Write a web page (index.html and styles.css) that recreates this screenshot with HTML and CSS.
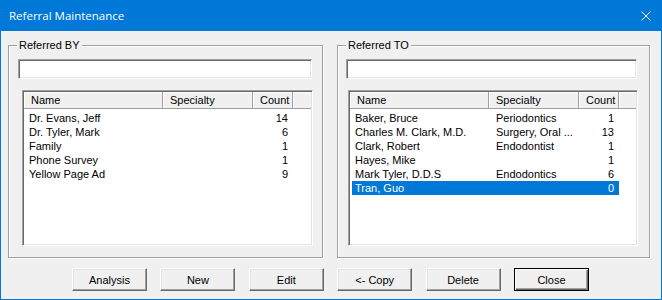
FILE: index.html
```html
<!DOCTYPE html>
<html lang="en">
<head>
  <meta charset="UTF-8" />
  <title>Referral Maintenance</title>
  <link rel="stylesheet" href="styles.css">
</head>
<body>
  <div class="window">
    <div class="titlebar">
      <span class="title">Referral Maintenance</span>
      <svg class="close-x" width="10" height="10" viewBox="0 0 10 10">
        <path d="M0.5 0.5 L9.5 9.5 M9.5 0.5 L0.5 9.5" stroke="#fff" stroke-width="1" fill="none" />
      </svg>
    </div>

    <div class="main">
      <div class="groups">
        <fieldset class="group group-by">
          <legend>Referred BY</legend>
          <input type="text" class="search" />
          <div class="list">
            <div class="list-head">
              <div class="hcell c-name">Name</div>
              <div class="hcell c-spec">Specialty</div>
              <div class="hcell c-count">Count</div>
              <div class="hcell c-fill"></div>
            </div>
            <div class="rows">
              <div class="row"><span class="name">Dr. Evans, Jeff</span><span class="spec"></span><span class="count">14</span></div>
              <div class="row"><span class="name">Dr. Tyler, Mark</span><span class="spec"></span><span class="count">6</span></div>
              <div class="row"><span class="name">Family</span><span class="spec"></span><span class="count">1</span></div>
              <div class="row"><span class="name">Phone Survey</span><span class="spec"></span><span class="count">1</span></div>
              <div class="row"><span class="name">Yellow Page Ad</span><span class="spec"></span><span class="count">9</span></div>
            </div>
          </div>
        </fieldset>

        <fieldset class="group group-to">
          <legend>Referred TO</legend>
          <input type="text" class="search" />
          <div class="list">
            <div class="list-head">
              <div class="hcell c-name">Name</div>
              <div class="hcell c-spec">Specialty</div>
              <div class="hcell c-count">Count</div>
              <div class="hcell c-fill"></div>
            </div>
            <div class="rows">
              <div class="row"><span class="name">Baker, Bruce</span><span class="spec">Periodontics</span><span class="count">1</span></div>
              <div class="row"><span class="name">Charles M. Clark, M.D.</span><span class="spec">Surgery, Oral ...</span><span class="count">13</span></div>
              <div class="row"><span class="name">Clark, Robert</span><span class="spec">Endodontist</span><span class="count">1</span></div>
              <div class="row"><span class="name">Hayes, Mike</span><span class="spec"></span><span class="count">1</span></div>
              <div class="row"><span class="name">Mark Tyler, D.D.S</span><span class="spec">Endodontics</span><span class="count">6</span></div>
              <div class="row selected"><span class="name">Tran, Guo</span><span class="spec"></span><span class="count">0</span></div>
            </div>
          </div>
        </fieldset>
      </div>

      <div class="buttons">
        <button type="button" class="btn">Analysis</button>
        <button type="button" class="btn">New</button>
        <button type="button" class="btn">Edit</button>
        <button type="button" class="btn">&lt;- Copy</button>
        <button type="button" class="btn">Delete</button>
        <button type="button" class="btn btn-default">Close</button>
      </div>
    </div>
  </div>
</body>
</html>
```

FILE: styles.css
```css
body {
  margin: 0;
}

.window {
  width: 662px;
  height: 300px;
  box-sizing: border-box;
  border: 1px solid #0078d7;
  border-top: 0;
  background: #f0f0f0;
  font-family: "Liberation Sans", Arial, sans-serif;
  font-size: 11px;
  color: #000;
}

.titlebar {
  height: 31px;
  background: #0078d7;
  color: #fff;
  display: flex;
  align-items: center;
  justify-content: space-between;
  padding: 0 10px 0 8px;
}

.title {
  font-family: "Open Sans", sans-serif;
  font-size: 11.5px;
}

.close-x {
  display: block;
}

.main {
  padding-left: 7px;
}

.groups {
  display: flex;
  gap: 14px;
  margin-top: 8px;
}

.group {
  margin: 0;
  padding: 0 0 11px;
  min-width: 0;
  border: 1px solid #a0a0a0;
  box-shadow: inset 1px 1px #fff, 1px 1px #fff;
}

.group-by {
  width: 315px;
  box-sizing: border-box;
}

.group-to {
  width: 313px;
  box-sizing: border-box;
}

.group legend {
  margin-left: 8px;
  padding: 0 2px;
  line-height: 13px;
  background: #f0f0f0;
}

.search {
  display: block;
  box-sizing: border-box;
  width: 294px;
  height: 20px;
  margin: 7px 0 0 9px;
  padding: 0;
  background: #fff;
  border: 1px solid;
  border-color: #a0a0a0 #fff #fff #a0a0a0;
  box-shadow: inset 1px 1px #696969, inset -1px -1px #e3e3e3;
}

.group-to .search {
  width: 291px;
  margin-left: 8px;
}

.list {
  box-sizing: border-box;
  width: 291px;
  height: 156px;
  margin: 11px 0 0 13px;
  padding: 1px;
  background: #fff;
  border: 1px solid;
  border-color: #a0a0a0 #fff #fff #a0a0a0;
  box-shadow: inset 1px 1px #696969, inset -1px -1px #e3e3e3;
  overflow: hidden;
}

.group-to .list {
  width: 290px;
  margin-left: 10px;
}

.list-head {
  display: flex;
  height: 17px;
}

.hcell {
  box-sizing: border-box;
  padding-left: 7px;
  line-height: 16px;
  background: #f0f0f0;
  border-right: 1px solid #a0a0a0;
  border-bottom: 1px solid #a0a0a0;
  box-shadow: inset 1px 1px #fff;
  white-space: nowrap;
}

.c-name {
  width: 139px;
}

.c-spec {
  width: 90px;
}

.c-count {
  width: 40px;
}

.c-fill {
  flex: 1;
  border-right: 0;
}

.rows {
  margin-top: 2px;
}

.row {
  display: flex;
  width: 267px;
  height: 14px;
  line-height: 14px;
  margin-left: 2px;
  white-space: nowrap;
}

.row .name {
  box-sizing: border-box;
  width: 137px;
  padding-left: 3px;
}

.row .spec {
  box-sizing: border-box;
  width: 90px;
  padding-left: 7px;
}

.row .count {
  box-sizing: border-box;
  width: 40px;
  padding-right: 5px;
  text-align: right;
}

.row.selected {
  background: #0078d7;
  color: #fff;
}

.buttons {
  display: flex;
  gap: 13.4px;
  margin: 10px 0 0 64px;
}

.btn {
  box-sizing: border-box;
  width: 75px;
  height: 23px;
  padding: 0;
  font: inherit;
  color: #000;
  background: #f0f0f0;
  border: 1px solid;
  border-color: #fff #696969 #696969 #fff;
  box-shadow: inset -1px -1px #a0a0a0, inset 1px 1px #e3e3e3;
}

.btn-default {
  border-color: #000;
  box-shadow: inset 1px 1px #fff, inset -1px -1px #696969, inset -2px -2px #a0a0a0;
}
```
